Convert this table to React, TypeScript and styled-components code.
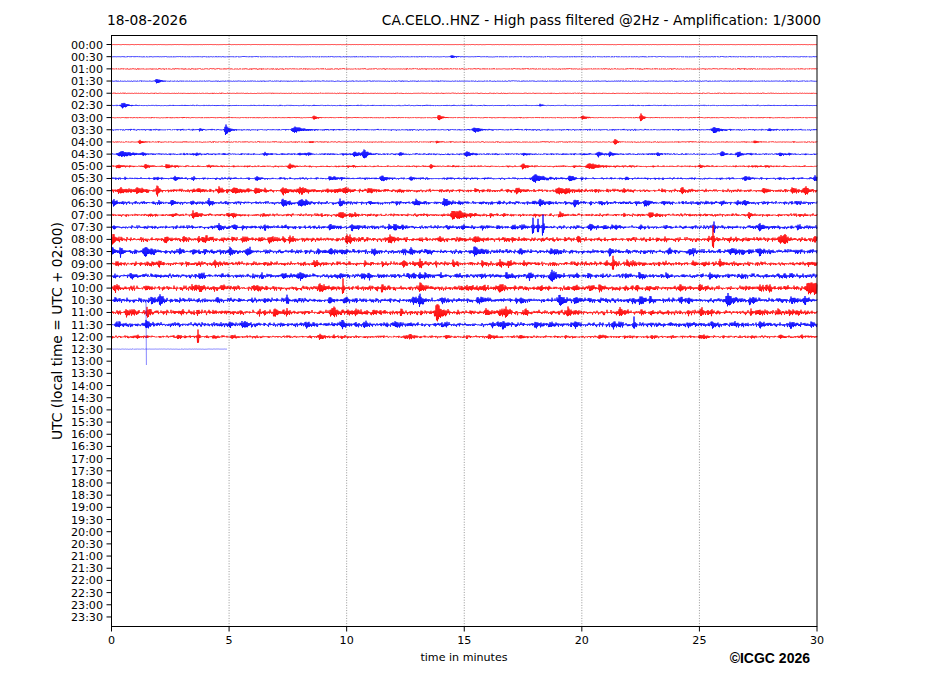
import { useMemo } from "react";
import styled, { createGlobalStyle } from "styled-components";

const GlobalStyle = createGlobalStyle`
  html, body {
    margin: 0;
    padding: 0;
    background: #fff;
  }
`;

const Figure = styled.div`
  width: 927px;
  height: 696px;
  display: flex;
  flex-direction: column;
  background: #fff;
  color: #000;
  font-family: "DejaVu Sans", "Noto Sans", sans-serif;
  overflow: hidden;
`;

const Header = styled.div`
  height: 35px;
  box-sizing: border-box;
  padding: 12px 106px 0 107px;
  display: flex;
  justify-content: space-between;
  align-items: flex-start;
`;

const HeaderText = styled.span`
  font-size: 13.8px;
  line-height: 16px;
  white-space: nowrap;
`;

const PlotRow = styled.div`
  display: flex;
  height: 615px;
`;

const YLabelCol = styled.div`
  width: 64px;
  height: 592px;
  flex: none;
  display: flex;
  align-items: center;
  justify-content: flex-end;
`;

const YLabel = styled.span`
  writing-mode: vertical-rl;
  transform: rotate(180deg);
  font-size: 13.8px;
  line-height: 14px;
  white-space: nowrap;
`;

const Chart = styled.svg`
  display: block;
  flex: none;
`;

const TickLabel = styled.text`
  font-family: "DejaVu Sans", sans-serif;
  font-size: 11.1px;
  fill: #000;
`;

const Footer = styled.div`
  width: 706px;
  padding-left: 111px;
  display: grid;
  grid-template-columns: 1fr auto 1fr;
  align-items: start;
`;

const XLabel = styled.span`
  grid-column: 2;
  font-size: 11.1px;
  line-height: 13px;
  margin-top: 1px;
  white-space: nowrap;
`;

const Credit = styled.span`
  grid-column: 3;
  justify-self: end;
  margin-right: 7px;
  font-family: "Liberation Sans", Arial, sans-serif;
  font-weight: 700;
  font-size: 14px;
  line-height: 16px;
  white-space: nowrap;
`;

// plot geometry, in page pixels
const X_LEFT = 111.5;
const X_RIGHT = 817;
const Y_TOP = 35.5;
const Y_BOTTOM = 626.5;
const ROW0 = 44.5;
const ROW_STEP = 12.18;

const minuteX = (m: number) => X_LEFT + (m * (X_RIGHT - X_LEFT)) / 30;
const rowY = (i: number) => ROW0 + i * ROW_STEP;

const RED = "#ff0000";
const BLUE = "#0000ff";

// background noise per half hour trace
const BASE = [
  0.2, 0.4, 0.5, 0.4, 0.4, 0.5, 0.5, 0.7, 0.5, 0.8, 0.8, 1.0, 1.5, 1.5, 1.3,
  1.6, 2.0, 2.0, 1.9, 2.0, 2.1, 2.1, 2.2, 2.0, 1.2, 0.25,
];

// [x, amplitude, width]
type Burst = [number, number, number];

const BURSTS: Record<number, Burst[]> = {
  1: [[452, 1.5, 3]],
  3: [[157, 2.5, 4]],
  5: [[123, 3, 4], [540, 1.2, 2]],
  6: [[314, 2, 3], [439, 3, 3], [583, 2, 4], [641, 4.5, 2]],
  7: [[200, 1.5, 2], [226, 6, 3], [295, 3, 8], [475, 2.5, 6], [714, 3.5, 5], [770, 1.5, 2]],
  8: [[140, 2, 3], [310, 1, 3], [437, 1.5, 2], [615, 3.5, 2], [755, 1.5, 3]],
  9: [
    [122, 3, 10], [143, 1.5, 2], [197, 1.2, 2], [265, 1.5, 3], [355, 2.5, 6], [364, 5, 3],
    [400, 1.5, 3], [467, 3, 4], [524, 1.5, 3], [598, 3, 3], [610, 2.5, 3], [658, 2, 2],
    [722, 2.5, 3], [738, 3, 3], [780, 2, 3],
  ],
  10: [[118, 2, 4], [146, 2.5, 3], [167, 2.5, 3], [290, 2.5, 3], [431, 2, 2], [523, 3.5, 3], [590, 3, 10], [700, 1.5, 3]],
  11: [[175, 2.5, 3], [194, 2, 2], [257, 2.5, 3], [330, 2, 3], [382, 3, 4], [411, 2, 3], [535, 3, 8], [570, 2, 3], [745, 2, 3], [815, 3.5, 3]],
  12: [
    [120, 2.5, 8], [137, 3.5, 3], [157, 7, 1.5], [219, 3, 3], [235, 3, 8], [256, 3, 3], [283, 3.5, 3],
    [300, 3, 8], [345, 3, 4], [517, 3, 3], [559, 3.5, 6], [682, 3, 3], [764, 3, 3], [793, 3, 4], [806, 3.5, 3],
  ],
  13: [[114, 3, 3], [172, 3, 3], [209, 3, 3], [283, 4.5, 3], [300, 3, 4], [340, 3, 3], [416, 3, 3], [445, 3, 5], [540, 3.5, 3], [575, 3, 3], [645, 3, 3], [745, 3, 3]],
  14: [[193, 4.5, 1], [340, 3, 4], [453, 4, 6], [460, 3, 6], [560, 2.5, 3], [650, 2.5, 3], [749, 3, 3]],
  15: [[219, 3, 3], [330, 3, 3], [395, 3, 3], [533, 13, 0.6], [538, 11, 0.6], [543, 13, 0.6], [590, 3, 4], [714, 8, 0.7], [760, 3, 5]],
  16: [[113, 4, 3], [270, 3, 4], [390, 3.5, 5], [475, 3, 5], [713, 18, 0.6], [780, 3, 4], [815, 4, 3]],
  17: [[112, 4, 3], [145, 3.5, 4], [230, 3, 3], [330, 3, 3], [475, 4, 5], [520, 3, 3], [610, 3, 3], [690, 3, 3], [760, 3, 4]],
  18: [[215, 3, 3], [315, 3, 3], [420, 4.5, 2], [500, 3, 3], [613, 8, 0.7], [720, 3, 3]],
  19: [[200, 3, 3], [300, 3, 3], [420, 3, 3], [552, 5, 5], [640, 3, 3], [710, 3, 3]],
  20: [[115, 3, 3], [200, 3, 3], [320, 4, 4], [343, 9, 0.6], [420, 4, 4], [500, 3, 4], [600, 3, 3], [700, 3, 3], [809, 6, 8]],
  21: [[160, 6, 1.2], [287, 6, 1.2], [330, 3, 3], [420, 3, 3], [560, 4, 5], [640, 3, 3], [728, 5, 5], [805, 3, 4]],
  22: [[147, 5, 2], [275, 4, 3], [331, 4, 3], [437, 8, 5], [500, 3, 3], [568, 4, 3], [620, 3, 4], [760, 3, 3]],
  23: [[146, 4, 3], [245, 3, 3], [396, 3, 3], [503, 3, 3], [634, 9, 0.6], [760, 3, 3]],
  24: [[178, 2.5, 2], [198, 11, 0.6], [232, 2.5, 2], [320, 3, 3], [410, 2, 3], [490, 2.5, 3], [520, 2, 3], [600, 2, 3], [700, 2, 3], [780, 2, 3]],
};

function mulberry32(seed: number) {
  let a = seed;
  return () => {
    a |= 0;
    a = (a + 0x6d2b79f5) | 0;
    let t = Math.imul(a ^ (a >>> 15), 1 | a);
    t = (t + Math.imul(t ^ (t >>> 7), 61 | t)) ^ t;
    return ((t ^ (t >>> 14)) >>> 0) / 4294967296;
  };
}

function tracePath(i: number): string {
  const rnd = mulberry32(1000 + i * 7919);
  const gauss = () => {
    const u = rnd() || 1e-6;
    const v = rnd();
    const g = Math.sqrt(-2 * Math.log(u)) * Math.cos(2 * Math.PI * v);
    return Math.max(-2.2, Math.min(2.2, g));
  };
  const base = BASE[i];
  const end = i === 25 ? 227 : X_RIGHT;
  const bursts: Burst[] = [...(BURSTS[i] ?? [])];
  if (base >= 0.8) {
    const n = Math.round(base * 14);
    for (let k = 0; k < n; k++) {
      bursts.push([X_LEFT + rnd() * (X_RIGHT - X_LEFT), base * (0.7 + rnd() * 0.8), 0.8 + rnd() * 2.5]);
    }
  }
  const y0 = rowY(i);
  const pts: string[] = [];
  let sign = 1;
  for (let x = X_LEFT; x <= end; x += 0.5) {
    // alternating sign keeps the noise a dense band around the baseline
    let v = sign * base * 0.55 * Math.abs(gauss());
    for (const [bx, a, w] of bursts) {
      const dx = x - bx;
      if (dx < -w * 0.5 - 1.5 || dx > w * 4) continue;
      const env = dx < 0 ? a * Math.exp(-((dx / (0.3 * w + 0.5)) ** 2)) : a * Math.exp(-dx / w);
      v += sign * env * (0.6 + 0.4 * rnd());
    }
    sign = -sign;
    pts.push(`${x.toFixed(1)} ${(y0 + v).toFixed(1)}`);
  }
  return `M${pts.join("L")}`;
}

const ROW_LABELS = Array.from({ length: 48 }, (_, i) => {
  const h = Math.floor(i / 2);
  return `${String(h).padStart(2, "0")}:${i % 2 ? "30" : "00"}`;
});

const X_TICKS = [0, 5, 10, 15, 20, 25, 30];

function Seismogram() {
  const traces = useMemo(() => BASE.map((_, i) => tracePath(i)), []);

  return (
    <Chart width={780} height={615} viewBox="64 35 780 615">
      {traces.map((d, i) => (
        <path
          key={i}
          d={d}
          fill="none"
          stroke={i % 2 ? BLUE : RED}
          strokeWidth={0.8}
          strokeOpacity={i === 25 ? 0.6 : 1}
        />
      ))}
      <path d="M146 300 L146.4 365" stroke={BLUE} strokeWidth={0.8} strokeOpacity={0.6} />

      {X_TICKS.slice(1, -1).map((m) => (
        <line
          key={m}
          x1={minuteX(m)}
          x2={minuteX(m)}
          y1={Y_TOP}
          y2={Y_BOTTOM}
          stroke="#000"
          strokeWidth={0.6}
          strokeOpacity={0.7}
          strokeDasharray="1 1.6"
        />
      ))}

      <rect
        x={X_LEFT}
        y={Y_TOP}
        width={X_RIGHT - X_LEFT}
        height={Y_BOTTOM - Y_TOP}
        fill="none"
        stroke="#000"
        strokeWidth={1}
      />

      {ROW_LABELS.map((label, i) => (
        <g key={label}>
          <line x1={X_LEFT - 5} x2={X_LEFT} y1={rowY(i)} y2={rowY(i)} stroke="#000" strokeWidth={1} />
          <TickLabel x={X_LEFT - 8.5} y={rowY(i) + 4} textAnchor="end">
            {label}
          </TickLabel>
        </g>
      ))}

      {X_TICKS.map((m) => (
        <g key={m}>
          <line x1={minuteX(m)} x2={minuteX(m)} y1={Y_BOTTOM} y2={Y_BOTTOM + 5} stroke="#000" strokeWidth={1} />
          <TickLabel x={minuteX(m)} y={644} textAnchor="middle">
            {m}
          </TickLabel>
        </g>
      ))}
    </Chart>
  );
}

export default function App() {
  return (
    <>
      <GlobalStyle />
      <Figure>
        <Header>
          <HeaderText>18-08-2026</HeaderText>
          <HeaderText>CA.CELO..HNZ - High pass filtered @2Hz - Amplification: 1/3000</HeaderText>
        </Header>
        <PlotRow>
          <YLabelCol>
            <YLabel>UTC (local time = UTC + 02:00)</YLabel>
          </YLabelCol>
          <Seismogram />
        </PlotRow>
        <Footer>
          <XLabel>time in minutes</XLabel>
          <Credit>©ICGC 2026</Credit>
        </Footer>
      </Figure>
    </>
  );
}
